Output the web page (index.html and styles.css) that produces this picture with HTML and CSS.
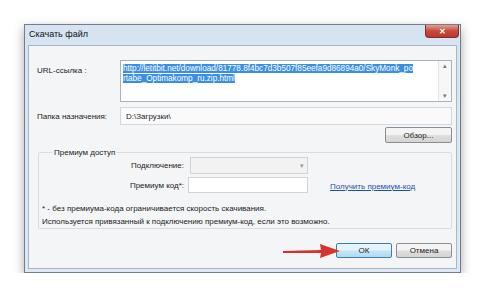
FILE: index.html
```html
<!DOCTYPE html>
<html lang="ru">
<head>
    <meta charset="UTF-8">
    <meta name="viewport" content="width=device-width, initial-scale=1.0">
    <link rel="stylesheet" href="styles.css">
    <title>Скачать файл</title>
</head>
<body>
    <div class="window">
        <div class="titlebar">
            <span class="title">Скачать файл</span>
            <span class="close">&#x2715;</span>
        </div>
        <div class="content">
            <div class="row url-row">
                <label class="label">URL-ссылка :</label>
                <div class="textarea">
                    <div class="url-text"><span class="sel">http://letitbit.net/download/81778.8f4bc7d3b507f85eefa9d86894a0/SkyMonk_po</span><br><span class="sel">rtabe_Optimakomp_ru.zip.html</span></div>
                    <div class="scrollbar">
                        <span class="arrow">&#9652;</span>
                        <span class="arrow">&#9662;</span>
                    </div>
                </div>
            </div>

            <div class="row folder-row">
                <label class="label">Папка назначения:</label>
                <div class="field readonly">D:\Загрузки\</div>
            </div>

            <div class="browse-row">
                <button class="btn browse">Обзор...</button>
            </div>

            <fieldset class="group">
                <legend>Премиум доступ</legend>
                <div class="group-grid">
                    <label class="glabel">Подключение:</label>
                    <div class="combo"><span class="combo-arrow">&#9662;</span></div>
                    <span></span>
                    <label class="glabel">Премиум код*:</label>
                    <div class="field code"></div>
                    <a class="link" href="#">Получить премиум-код</a>
                </div>
                <p class="note">* - без премиума-кода ограничивается скорость скачивания.<br>Используется привязанный к подключению премиум-код, если это возможно.</p>
            </fieldset>

            <div class="buttons">
                <button class="btn ok">ОК</button>
                <button class="btn">Отмена</button>
                <svg class="red-arrow" width="60" height="16" viewBox="0 0 60 16">
                    <path d="M2 8 L40 7 L39 1 L59 8 L39 15 L40 10 L2 10 Z" fill="#d8332b"/>
                </svg>
            </div>
        </div>
    </div>
</body>
</html>
```

FILE: styles.css
```css
body {
    margin: 0;
    background: #ffffff;
    font-family: "Liberation Sans", Arial, sans-serif;
    font-size: 8px;
    color: #222;
}

.window {
    margin: 24px 0 0 24px;
    width: 429px;
    height: 244px;
    border: 1px solid #6f7e90;
    background: linear-gradient(#d6e3f1, #dde8f4);
    padding: 0 3px 3px 3px;
    box-shadow: 0 4px 10px rgba(0, 0, 0, 0.35);
    display: flex;
    flex-direction: column;
    box-sizing: content-box;
}

.titlebar {
    height: 20px;
    display: flex;
    align-items: center;
    justify-content: space-between;
    position: relative;
}

.title {
    font-size: 9px;
    color: #111;
    padding-left: 1px;
    margin-top: -3px;
}

.close {
    position: absolute;
    right: -2px;
    top: 0;
    width: 34px;
    height: 13px;
    background: linear-gradient(#e0a096, #c8493a 50%, #b93a2c);
    border: 1px solid #7d2e26;
    border-top: none;
    border-radius: 0 0 4px 4px;
    color: #fff;
    font-size: 8px;
    font-weight: bold;
    display: flex;
    align-items: center;
    justify-content: center;
    box-sizing: border-box;
}

.content {
    flex: 1;
    background: #f4f5f7;
    border: 1px solid #a9b5c3;
    padding: 14px 4px 0 8px;
    display: flex;
    flex-direction: column;
    position: relative;
}

.row {
    display: grid;
    grid-template-columns: 83px 1fr;
    align-items: start;
}

.label {
    padding-top: 6px;
}

.textarea {
    height: 40px;
    border: 1px solid #aab3bd;
    background: #fff;
    display: flex;
}

.url-text {
    flex: 1;
    padding: 3px 2px;
    font-size: 8.2px;
    line-height: 9.5px;
    color: #fff;
    white-space: nowrap;
    overflow: hidden;
}

.sel {
    background: #3a8fe3;
}

.scrollbar {
    width: 12px;
    display: flex;
    flex-direction: column;
    justify-content: space-between;
    align-items: center;
    background: #f7f7f7;
    border-left: 1px solid #e6e6e6;
}

.arrow {
    color: #777;
    font-size: 7px;
    line-height: 10px;
}

.folder-row {
    margin-top: 5px;
}

.folder-row .label {
    padding-top: 5px;
}

.field {
    height: 18px;
    border: 1px solid #d3d8de;
    background: #fafafa;
    box-sizing: border-box;
    padding: 4px 5px;
}

.browse-row {
    display: flex;
    justify-content: flex-end;
    margin-top: 2px;
}

.btn {
    font-family: "Liberation Sans", Arial, sans-serif;
    font-size: 8px;
    color: #222;
    height: 16px;
    border: 1px solid #8a8f96;
    border-radius: 2px;
    background: linear-gradient(#f4f4f4 45%, #dedede 55%, #d4d4d4);
    padding: 0;
}

.browse {
    width: 67px;
}

.group {
    margin: 5px 0 0 1px;
    border: 1px solid #d8dde2;
    border-radius: 2px;
    padding: 0 4px 3px 3px;
    height: 81px;
    box-sizing: border-box;
}

.group legend {
    margin-left: 10px;
    padding: 0 2px;
}

.group-grid {
    display: grid;
    grid-template-columns: 142px 120px 1fr;
    column-gap: 4px;
    row-gap: 3px;
    align-items: center;
}

.glabel {
    text-align: right;
}

.combo {
    height: 17px;
    border: 1px solid #cfd4da;
    background: #f2f2f2;
    display: flex;
    justify-content: flex-end;
    align-items: center;
    padding-right: 3px;
    box-sizing: border-box;
    margin-left: 2px;
}

.combo-arrow {
    color: #999;
    font-size: 7px;
}

.field.code {
    height: 16px;
    background: #fff;
    border-color: #d0d5db;
}

.link {
    color: #1b4fb5;
    padding-left: 18px;
    padding-top: 2px;
}

.note {
    margin: 9px 0 0 0;
    line-height: 13px;
}

.buttons {
    display: flex;
    justify-content: flex-end;
    gap: 4px;
    margin-top: 14px;
    position: relative;
}

.buttons .btn {
    width: 56px;
    height: 15px;
}

.btn.ok {
    border-color: #3c7fb1;
    background: linear-gradient(#e5f4fc 45%, #c4e5f6 55%, #b0dbf3);
}

.red-arrow {
    position: absolute;
    left: 244px;
    top: 0;
}
```
